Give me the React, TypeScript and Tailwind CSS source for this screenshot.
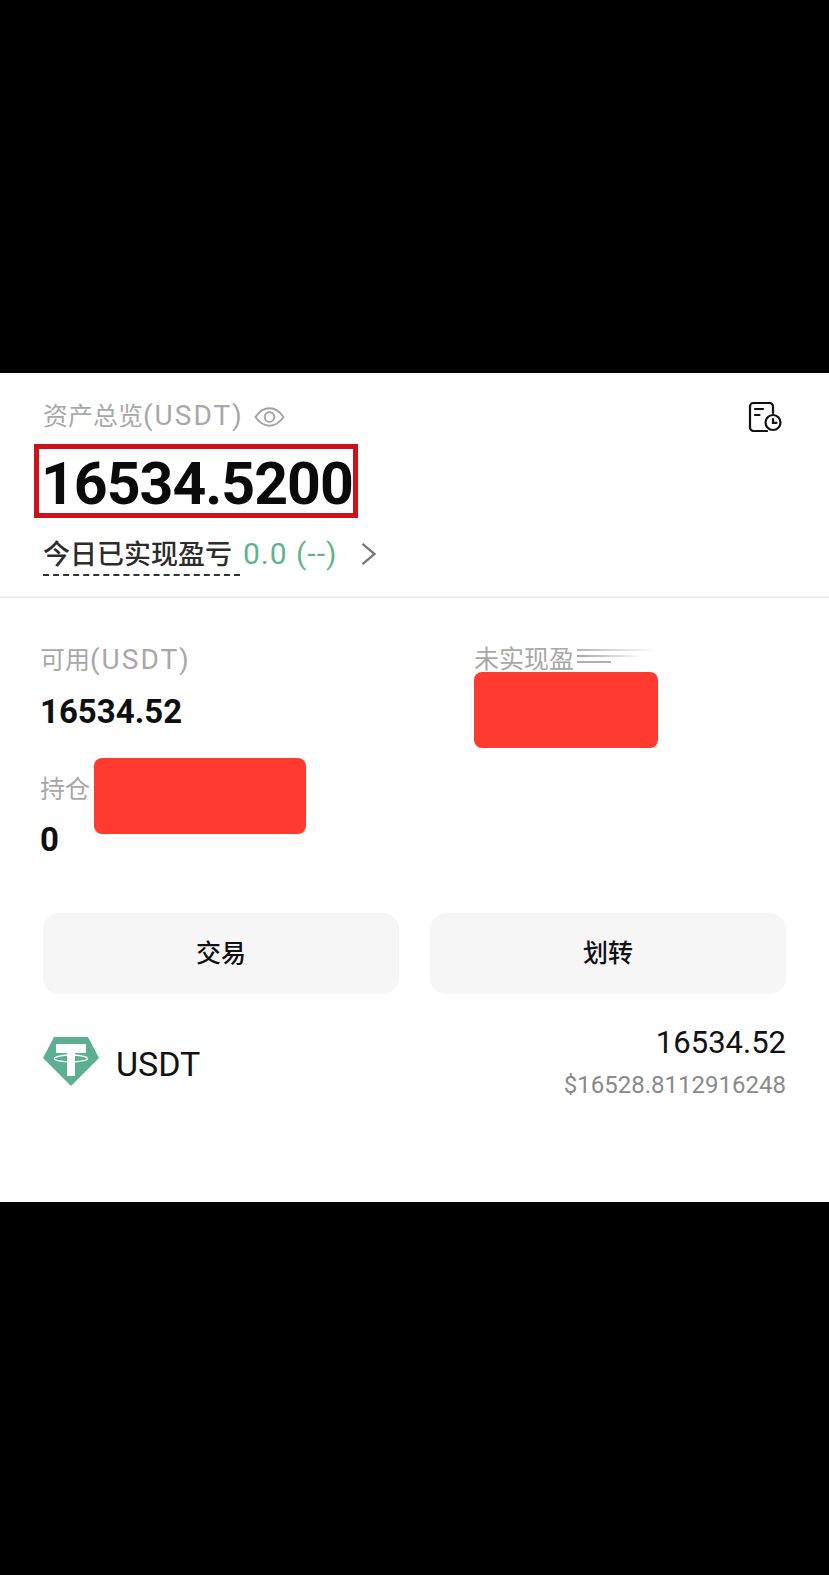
import React from "react";

const font = { fontFamily: 'Roboto,"Noto Sans CJK SC",sans-serif' };

function Eye() {
  return (
    <svg width="31" height="22" viewBox="0 0 32 22" fill="none" stroke="#a3a3a3" strokeWidth="2">
      <path d="M1.500 11C6 4.500 10.500 2 16 2s10 2.500 14.500 9C26 17.500 21.500 20 16 20S6 17.500 1.500 11Z" />
      <circle cx="16" cy="11" r="5" />
    </svg>
  );
}

function Record() {
  return (
    <svg width="34" height="31" viewBox="0 0 34 31" fill="none" stroke="#111" strokeWidth="2.200" strokeLinecap="round">
      <path d="M19 30H5.500A3.500 3.500 0 0 1 2 26.500V5.500A3.500 3.500 0 0 1 5.500 2h16A3.500 3.500 0 0 1 25 5.500V12" />
      <path d="M7 8h8M7 14h4.500" />
      <circle cx="25" cy="21.500" r="7.500" />
      <path d="M25 18v3.800h3.500" />
    </svg>
  );
}

function Tether() {
  return (
    <svg width="56" height="49" viewBox="0 0 56 49" className="shrink-0">
      <path d="M11 0h34l11 21-28 28L0 21Z" fill="#5cb08f" />
      <path d="M13 7h30v9H32v23h-8V16H13Z" fill="#fff" />
      <ellipse cx="28" cy="21.500" rx="16.500" ry="3.500" fill="none" stroke="#fff" strokeWidth="1.300" />
    </svg>
  );
}

function Label({ cjk, latin }: { cjk: string; latin?: string }) {
  return (
    <span className="text-[25px] leading-[36px] text-[#a8a8a8]">
      {cjk}
      {latin && <span className="text-[28px] tracking-[2px]">{latin}</span>}
    </span>
  );
}

export default function App() {
  return (
    <div className="flex min-h-[1575px] flex-col bg-black" style={font}>
      <div className="h-[373px] shrink-0" />
      <main className="relative h-[829px] shrink-0 bg-white">
        <section className="h-[225px] border-b-2 border-[#f0f0f0] pl-[43px] pr-[47px]">
          <div className="flex items-center justify-between pt-[25px]">
            <div className="flex items-center gap-[10px]">
              <Label cjk="资产总览" latin="(USDT)" />
              <Eye />
            </div>
            <Record />
          </div>
          <div className="-ml-[9px] mt-[9px] flex h-[74px] w-[324px] items-center border-[5px] border-[#cc1218] pl-[2px] pt-[5px]">
            <span className="text-[59px] font-bold leading-none tracking-[-1px] text-[#0a0a0a]">16534.5200</span>
          </div>
          <div className="mt-[18px] flex items-center">
            <span className="border-b-2 border-dashed border-[#333] pr-[8px] text-[27px] font-medium leading-[38px] text-[#2c2c2c]">今日已实现盈亏</span>
            <span className="ml-[3px] -mt-[4px] text-[30px] leading-[38px] tracking-[1px] text-[#5fb48c]">0.0 (--)</span>
            <svg width="18" height="24" viewBox="0 0 18 26" fill="none" stroke="#777" strokeWidth="2.500" className="ml-[23px] -mt-[4px]">
              <path d="M2 2l13 11L2 24" />
            </svg>
          </div>
        </section>

        <section className="grid h-[315px] grid-cols-[434px_1fr] pl-[40px]">
          <div className="pt-[44px]">
            <Label cjk="可用" latin="(USDT)" />
            <div className="mt-[13px] text-[33px] font-bold leading-[40px] text-[#0f0f0f]">16534.52</div>
            <div className="mt-[40px] flex items-start">
              <Label cjk="持仓" />
            </div>
            <div className="mt-[12px] text-[33px] font-bold leading-[40px] text-[#0f0f0f]">0</div>
          </div>
          <div className="pt-[44px]">
            <div className="flex items-center">
              <Label cjk="未实现盈" />
              <div className="ml-[3px] flex w-[78px] -translate-y-[4px] flex-col gap-[4px]">
                <div className="h-[2px] w-full bg-linear-to-r from-[#b4b4b4] to-[#ffffff]" />
                <div className="h-[2px] w-[64px] bg-linear-to-r from-[#a4a4a4] to-[#ffffff]" />
                <div className="h-[2px] w-[34px] bg-[#b0b0b0]" />
              </div>
            </div>
          </div>
        </section>

        <section className="flex gap-[31px] pl-[43px] pr-[43px]">
          <button className="h-[81px] w-[356px] rounded-[16px] bg-[#f6f6f6] text-[25px] font-medium text-[#111]">交易</button>
          <button className="h-[81px] w-[356px] rounded-[16px] bg-[#f6f6f6] text-[25px] font-medium text-[#111]">划转</button>
        </section>

        <section className="mt-[30px] flex items-start justify-between pl-[43px] pr-[43px]">
          <div className="mt-[13px] flex items-center gap-[17px]">
            <Tether />
            <span className="mt-[4px] text-[34px] leading-[40px] text-[#111]">USDT</span>
          </div>
          <div className="text-right">
            <div className="text-[31px] leading-[38px] text-[#111]">16534.52</div>
            <div className="mt-[5px] text-[24px] leading-[36px] text-[#8a8a8a]">$16528.8112916248</div>
          </div>
        </section>

        <div className="absolute left-[94px] top-[385px] h-[76px] w-[212px] rounded-[8px] bg-[#ff3b30]" />
        <div className="absolute left-[474px] top-[299px] h-[76px] w-[184px] rounded-[8px] bg-[#ff3b30]" />
      </main>
      <div className="flex-1" />
    </div>
  );
}
